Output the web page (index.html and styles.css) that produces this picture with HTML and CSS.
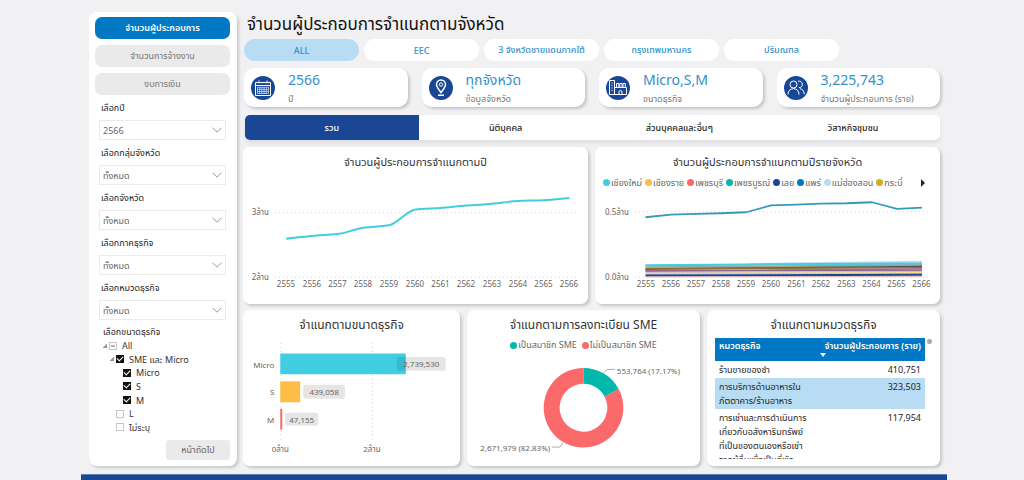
FILE: index.html
```html
<!DOCTYPE html>
<html lang="th">
<head>
<meta charset="utf-8">
<meta name="viewport" content="width=device-width, initial-scale=1">
<title>จำนวนผู้ประกอบการจำแนกตามจังหวัด</title>
<link rel="stylesheet" href="styles.css">
</head>
<body>
<div class="page">
  <div class="layout">
    <aside class="sidebar">
      <nav class="menu">
        <button class="menu-btn active" type="button">จำนวนผู้ประกอบการ</button>
        <button class="menu-btn" type="button">จำนวนการจ้างงาน</button>
        <button class="menu-btn" type="button">งบการเงิน</button>
      </nav>
      <div class="filters">
        <div class="filter"><label for="f1">เลือกปี</label><div class="select"><select id="f1"><option>2566</option></select><svg viewBox="0 0 10 6"><path d="M.5 .7 5 5.2 9.5 .7"/></svg></div></div>
        <div class="filter"><label for="f2">เลือกกลุ่มจังหวัด</label><div class="select"><select id="f2"><option>ทั้งหมด</option></select><svg viewBox="0 0 10 6"><path d="M.5 .7 5 5.2 9.5 .7"/></svg></div></div>
        <div class="filter"><label for="f3">เลือกจังหวัด</label><div class="select"><select id="f3"><option>ทั้งหมด</option></select><svg viewBox="0 0 10 6"><path d="M.5 .7 5 5.2 9.5 .7"/></svg></div></div>
        <div class="filter"><label for="f4">เลือกภาคธุรกิจ</label><div class="select"><select id="f4"><option>ทั้งหมด</option></select><svg viewBox="0 0 10 6"><path d="M.5 .7 5 5.2 9.5 .7"/></svg></div></div>
        <div class="filter"><label for="f5">เลือกหมวดธุรกิจ</label><div class="select"><select id="f5"><option>ทั้งหมด</option></select><svg viewBox="0 0 10 6"><path d="M.5 .7 5 5.2 9.5 .7"/></svg></div></div>
      </div>
      <fieldset class="tree">
        <legend>เลือกขนาดธุรกิจ</legend>
        <label class="node"><i class="caret"></i><input type="checkbox" class="partial">All</label>
        <label class="node level-1"><i class="caret"></i><input type="checkbox" checked>SME และ Micro</label>
        <label class="node level-2"><input type="checkbox" checked>Micro</label>
        <label class="node level-2"><input type="checkbox" checked>S</label>
        <label class="node level-2"><input type="checkbox" checked>M</label>
        <label class="node level-1b"><input type="checkbox">L</label>
        <label class="node level-1b"><input type="checkbox">ไม่ระบุ</label>
      </fieldset>
      <button class="next" type="button">หน้าถัดไป</button>
    </aside>

    <main class="main">
      <h1>จำนวนผู้ประกอบการจำแนกตามจังหวัด</h1>
      <div class="pills">
        <button class="pill active" type="button">ALL</button>
        <button class="pill" type="button">EEC</button>
        <button class="pill" type="button">3 จังหวัดชายแดนภาคใต้</button>
        <button class="pill" type="button">กรุงเทพมหานคร</button>
        <button class="pill" type="button">ปริมณฑล</button>
      </div>
      <div class="stats">
        <div class="stat">
          <svg class="stat-icon" viewBox="0 0 24 24"><circle cx="12" cy="12" r="12"/><path d="M4.500 6.500h15v13h-15zM4.500 9.500h15M8 4.500v3M16 4.500v3"/><path class="fine" d="M6.500 11.300h11v6.200h-11zM6.500 13.400h11M6.500 15.500h11M8.700 11.300v6.200M10.900 11.300v6.200M13.100 11.300v6.200M15.300 11.300v6.200"/></svg>
          <div class="stat-text"><strong>2566</strong><span>ปี</span></div>
        </div>
        <div class="stat">
          <svg class="stat-icon" viewBox="0 0 24 24"><circle cx="12" cy="12" r="12"/><path class="bold" d="M12 16.500C9.500 13 7.500 11 7.500 8.500a4.500 4.500 0 0 1 9 0C16.500 11 14.500 13 12 16.500zM9 19.300h6"/><circle class="ring" cx="12" cy="8.500" r="1.700"/></svg>
          <div class="stat-text"><strong>ทุกจังหวัด</strong><span>ข้อมูลจังหวัด</span></div>
        </div>
        <div class="stat">
          <svg class="stat-icon" viewBox="0 0 24 24"><circle cx="12" cy="12" r="12"/><path d="M3.500 18.500v-14h5v14M8.500 11.500h12v7h-17M10.500 11V7.500h2.300V11M13.800 11V7.500h2.300V11M17 11V7.500h2.300V11M13 18.500V16a1.500 1.500 0 0 1 3 0v2.500"/><path class="fine" d="M5.200 7h1.600M5.200 9.500h1.600M5.200 12h1.600M5.200 14.500h1.600"/></svg>
          <div class="stat-text"><strong>Micro,S,M</strong><span>ขนาดธุรกิจ</span></div>
        </div>
        <div class="stat">
          <svg class="stat-icon" viewBox="0 0 24 24"><circle cx="12" cy="12" r="12"/><circle class="ring" cx="9.500" cy="8.500" r="3.500"/><path d="M4 18.500c0-3.500 2-5.800 5.500-5.800s5.500 2.300 5.500 5.800M14 5.300a3.300 3.300 0 1 1 .8 6.400M16 12.700c2.800.5 4.200 2.600 4.200 5.500"/></svg>
          <div class="stat-text"><strong>3,225,743</strong><span>จำนวนผู้ประกอบการ (ราย)</span></div>
        </div>
      </div>
      <div class="tabs">
        <button class="tab active" type="button">รวม</button>
        <button class="tab" type="button">นิติบุคคล</button>
        <button class="tab" type="button">ส่วนบุคคลและอื่นๆ</button>
        <button class="tab" type="button">วิสาหกิจชุมชน</button>
      </div>

      <div class="row row-two">
        <section class="card">
          <h2>จำนวนผู้ประกอบการจำแนกตามปี</h2>
          <svg class="chart" viewBox="243 175 345 128">
            <path class="grid-line" d="M275 212.500H579M275 277H579"/>
            <g class="axis end"><text x="269" y="215">3ล้าน</text><text x="269" y="280">2ล้าน</text></g>
            <g class="axis mid"><text x="286" y="287">2555</text><text x="312" y="287">2556</text><text x="337.500" y="287">2557</text><text x="363" y="287">2558</text><text x="389" y="287">2559</text><text x="415" y="287">2560</text><text x="440.500" y="287">2561</text><text x="466" y="287">2562</text><text x="492" y="287">2563</text><text x="518" y="287">2564</text><text x="543.500" y="287">2565</text><text x="569" y="287">2566</text></g>
            <path class="line" stroke="#41cee2" stroke-width="2" d="M286 238.500C294.600 237.600 303.200 236.500 311.800 235.700S328.900 234.700 337.500 233.800C346 232.900 354.700 228.700 363.300 227.500S380.400 226.400 389 225C397.600 223.600 406.200 210.600 414.800 209.500S432 208.400 440.600 207.700S457.800 206 466.400 205.300S483.500 204.200 492.100 203.500S509.300 201.100 517.900 200.700S535.100 200.400 543.700 200S560.900 198.500 569.500 197.700"/>
          </svg>
        </section>
        <section class="card">
          <h2>จำนวนผู้ประกอบการจำแนกตามปีรายจังหวัด</h2>
          <div class="legend legend-left">
            <span class="key cyan">เชียงใหม่</span><span class="key amber">เชียงราย</span><span class="key red">เพชรบุรี</span><span class="key teal">เพชรบูรณ์</span><span class="key navy">เลย</span><span class="key blue">แพร่</span><span class="key sky">แม่ฮ่องสอน</span><span class="key gold">กระบี่</span>
            <button class="more" type="button" aria-label="ถัดไป"></button>
          </div>
          <svg class="chart" viewBox="595 190 345 113">
            <path class="grid-line" d="M635 211.500H931M635 277H931"/>
            <g class="axis end"><text x="629" y="215">0.5ล้าน</text><text x="629" y="280">0.0ล้าน</text></g>
            <g class="axis mid"><text x="646" y="287">2555</text><text x="671" y="287">2556</text><text x="696" y="287">2557</text><text x="721" y="287">2558</text><text x="746" y="287">2559</text><text x="771" y="287">2560</text><text x="796.500" y="287">2561</text><text x="821" y="287">2562</text><text x="846.500" y="287">2563</text><text x="871.500" y="287">2564</text><text x="896.500" y="287">2565</text><text x="921.500" y="287">2566</text></g>
            <path class="line" stroke="#3599b8" stroke-width="1.800" d="M645.500 217 671 214.300 696 213.600 721 213 746 212 771 205.200 796 204.300 821 203.300 847 203 872 202 897 208.700 922 207.300"/>
            <g class="line" stroke-width="1.500">
              <path stroke="#b8dcf3" stroke-width="2" d="M746 264.500 771 263.500 922 261.500"/>
              <path stroke="#41cee2" stroke-width="2.200" d="M645.500 265 746 264.300 922 263.300"/>
              <path stroke="#8aa9b2" d="M645.500 266.700 922 264.800"/>
              <path stroke="#b79a82" d="M645.500 268 922 265.200"/>
              <path stroke="#52585c" d="M645.500 269 922 266.300"/>
              <path stroke="#8c7323" d="M645.500 268.500 922 267.400"/>
              <path stroke="#c0697c" d="M645.500 270.300 922 268.800"/>
              <path stroke="#85649b" d="M645.500 271 922 270"/>
              <path stroke="#c9b8dd" d="M645.500 272.200 922 271.200"/>
              <path stroke="#f2dc83" d="M645.500 273.300 922 272.400"/>
              <path stroke="#b8c4ce" d="M645.500 274.300 922 273.600"/>
              <path stroke="#194796" stroke-width="2" d="M645.500 275.300 922 274.600"/>
              <path stroke="#e8a5a5" stroke-width=".8" d="M645.500 276.600 922 276.200"/>
            </g>
          </svg>
        </section>
      </div>

      <div class="row row-three">
        <section class="card">
          <h2>จำแนกตามขนาดธุรกิจ</h2>
          <svg class="chart" viewBox="243 337 217 129">
            <path class="grid-line" d="M280.500 342V442M372.500 342V442"/>
            <path fill="#41cee2" d="M280 352.500h126v21H280z"/>
            <path fill="#ffbc47" d="M280 380.500h20v21h-20z"/>
            <path fill="#fb6a6a" d="M280 408h2v21h-2z"/>
            <g class="tag"><rect x="397" y="356" width="49" height="14" rx="2"/><rect x="303" y="384" width="42" height="14" rx="2"/><rect x="285" y="412" width="33" height="13" rx="2"/></g>
            <g class="axis mid"><text x="421.500" y="366.500">2,739,530</text><text x="324" y="394">439,058</text><text x="301.500" y="422">47,155</text><text x="280" y="451">0ล้าน</text><text x="372" y="451">2ล้าน</text></g>
            <g class="axis end"><text x="274" y="367">Micro</text><text x="274" y="394">S</text><text x="274" y="422">M</text></g>
          </svg>
        </section>
        <section class="card">
          <h2>จำแนกตามการลงทะเบียน SME</h2>
          <div class="legend legend-mid"><span class="key teal">เป็นสมาชิก SME</span><span class="key red">ไม่เป็นสมาชิก SME</span></div>
          <svg class="chart" viewBox="468 352 233 114">
            <path fill="#fb6a6a" d="M619.750 388.100A40 40 0 1 1 584.500 367V383A24 24 0 1 0 605.650 395.660z"/>
            <path fill="#01b8aa" d="M584.500 367A40 40 0 0 1 619.750 388.100L605.650 395.660A24 24 0 0 0 584.500 383z"/>
            <path class="leader" d="M605 372 608 368.500H616M553 446.500H561L564 442"/>
            <g class="axis"><text x="618" y="373">553,764 (17.17%)</text></g>
            <g class="axis end"><text x="551" y="450">2,671,979 (82.83%)</text></g>
          </svg>
        </section>
        <section class="card">
          <h2>จำแนกตามหมวดธุรกิจ</h2>
          <div class="table-wrap">
            <table>
              <thead><tr><th scope="col">หมวดธุรกิจ</th><th scope="col" class="num">จำนวนผู้ประกอบการ (ราย)<i class="sort"></i></th></tr></thead>
              <tbody>
                <tr><td>ร้านขายของชำ</td><td class="num">410,751</td></tr>
                <tr class="alt"><td>การบริการด้านอาหารใน<br>ภัตตาคาร/ร้านอาหาร</td><td class="num">323,503</td></tr>
                <tr><td>การเช่าและการดำเนินการ<br>เกี่ยวกับอสังหาริมทรัพย์<br>ที่เป็นของตนเองหรือเช่า<br>จากผู้อื่นเพื่อเป็นที่พัก</td><td class="num">117,954</td></tr>
              </tbody>
            </table>
            <i class="thumb"></i>
          </div>
        </section>
      </div>
    </main>
  </div>
  <footer class="footer"></footer>
</div>
</body>
</html>
```
FILE: styles.css
```css
* { box-sizing: border-box; }
body {
  margin: 0;
  background: #f1f1f4;
  color: #252423;
  font-family: "Noto Sans", "Noto Sans Thai", "Prompt", sans-serif;
  font-size: 9px;
}
button, select, input { font: inherit; margin: 0; }
button { border: 0; padding: 0; cursor: pointer; white-space: nowrap; }
h1, h2 { margin: 0; font-weight: 400; white-space: nowrap; }

.page {
  display: flex;
  flex-direction: column;
  height: 100vh;
  min-height: 480px;
  overflow: hidden;
  padding: 12px 77px 0 81px;
}
.layout {
  flex: 1;
  min-height: 0;
  display: grid;
  grid-template-columns: 148px minmax(0, 1fr);
  grid-template-rows: minmax(0, 1fr);
  gap: 6px;
  padding: 0 7px 8px 8px;
}
.footer {
  flex: 0 0 6px;
  background: #194796;
  border-top: 1px solid #5f7fb5;
}

/* Sidebar */
.sidebar {
  display: flex;
  flex-direction: column;
  padding: 5px 7px 6px 6px;
  background: #fff;
  border-radius: 8px;
  box-shadow: 2px 2px 3px rgba(0, 0, 0, .16);
}
.menu { display: grid; gap: 6px; }
.menu-btn {
  height: 22px;
  border-radius: 7px;
  background: #eaeaea;
  color: #777;
}
.menu-btn.active { background: #0078c4; color: #fff; font-weight: 600; }
.filters { padding: 0 4px; }
.filter > label { display: block; height: 25px; padding-left: 2px; line-height: 26px; }
.select { position: relative; height: 20px; }
.select select {
  appearance: none;
  display: block;
  width: 100%;
  height: 100%;
  padding: 0 3px;
  border: 1px solid #eaeaea;
  border-radius: 0;
  background: #fff;
  color: #666;
}
.select svg {
  position: absolute;
  right: 4px;
  top: 7px;
  width: 10px;
  height: 6px;
  fill: none;
  stroke: #999;
  pointer-events: none;
}
.tree {
  flex: 1;
  display: flex;
  flex-direction: column;
  justify-content: space-between;
  min-width: 0;
  min-height: 0;
  margin: 5px 0 6px;
  padding: 0 0 0 8px;
  border: 0;
}
.tree legend { padding: 0; line-height: 14px; }
.node { display: flex; align-items: center; line-height: 13px; color: #333; }
.level-1 { padding-left: 7px; }
.level-1b { padding-left: 13px; }
.level-2 { padding-left: 20px; }
.caret {
  width: 4px;
  height: 4px;
  margin-right: 2px;
  background: linear-gradient(135deg, transparent 50%, #999 50%);
}
.node input {
  appearance: none;
  width: 8px;
  height: 8px;
  margin-right: 5px;
  border: 1px solid #c8c6c4;
  background: #fff;
}
.node input:checked { border-color: #111; background: #111; }
.node input:checked::after {
  content: "";
  display: block;
  width: 5px;
  height: 3px;
  border: solid #fff;
  border-width: 0 0 1px 1px;
  transform: rotate(-45deg);
}
.node .partial { background: linear-gradient(#b5b3b1, #b5b3b1) center / 4px 2px no-repeat #fff; }
.next {
  align-self: flex-end;
  width: 64px;
  height: 20px;
  border-radius: 3px;
  background: #eaeaea;
  color: #666;
}

/* Main column */
.main { display: flex; flex-direction: column; min-width: 0; }
h1 { height: 27px; padding-left: 4px; font-size: 17px; line-height: 23px; color: #111; }
.pills { display: flex; gap: 5px; padding-left: 1px; }
.pill {
  flex: 0 0 115px;
  height: 22px;
  border-radius: 11px;
  background: #fff;
  color: #3191cf;
  font-weight: 500;
}
.pill.active { background: #b7dcf4; }
.stats { display: grid; grid-template-columns: repeat(4, 1fr); gap: 14px; margin-top: 7px; padding-left: 1px; }
.stat {
  display: flex;
  align-items: center;
  gap: 13px;
  height: 39px;
  padding-left: 7px;
  background: #fff;
  border-radius: 10px;
  box-shadow: 2px 2px 3px rgba(0, 0, 0, .18);
  white-space: nowrap;
}
.stat-icon { width: 24px; height: 24px; fill: none; stroke: #fff; stroke-width: 1; }
.stat-icon circle { fill: #194796; stroke: none; }
.stat-icon .ring { fill: none; stroke: #fff; }
.stat-icon .fine { stroke-width: .6; }
.stat-icon .bold { stroke-width: 1.5; }
.stat-text { display: grid; padding-top: 4px; }
.stat-text strong { font-size: 14px; line-height: 19px; font-weight: 400; color: #3191cf; }
.stat-text span { line-height: 20px; color: #777; }
.tabs {
  display: grid;
  grid-template-columns: repeat(4, 1fr);
  margin: 8px 0 0 2px;
  border-radius: 5px;
  background: #fff;
  box-shadow: 0 3px 4px rgba(0, 0, 0, .08);
}
.tab { height: 25px; background: none; font-weight: 500; color: #252423; }
.tab.active { background: #194796; color: #fff; border-radius: 5px 0 0 5px; }

.row { display: grid; grid-template-rows: minmax(0, 1fr); flex: 1; min-height: 0; }
.row-two { grid-template-columns: 1fr 1fr; gap: 7px; margin-top: 7px; }
.row-three { grid-template-columns: 217fr 233fr 233fr; gap: 7px; margin-top: 6px; }
.card {
  display: flex;
  flex-direction: column;
  min-width: 0;
  min-height: 0;
  background: #fff;
  border-radius: 7px;
  box-shadow: 2px 2px 3px rgba(0, 0, 0, .18);
}
.card h2 { flex: none; height: 28px; line-height: 30px; font-size: 12px; text-align: center; color: #333; }
.row-two h2 { font-size: 11px; }
.chart { display: block; flex: 1; width: 100%; min-height: 0; }
.grid-line { fill: none; stroke: #d6d6d6; stroke-width: 1; stroke-dasharray: 1 3; }
.axis { font-size: 8px; fill: #666; }
.end { text-anchor: end; }
.mid { text-anchor: middle; }
.line { fill: none; stroke-linejoin: round; }
.tag { fill: #000; fill-opacity: .1; }
.leader { fill: none; stroke: #aaa; stroke-width: 1; }

.legend { display: flex; flex: none; align-items: center; gap: 3px; height: 15px; color: #666; white-space: nowrap; }
.legend-left { padding: 0 15px 0 8px; }
.legend-mid { justify-content: center; gap: 5px; }
.key { display: flex; align-items: center; gap: 1px; }
.key::before { content: ""; width: 7px; height: 7px; border-radius: 50%; background: currentColor; }
.cyan::before { background: #41cee2; }
.amber::before { background: #ffbc47; }
.red::before { background: #fb6a6a; }
.teal::before { background: #01b8aa; }
.navy::before { background: #194796; }
.blue::before { background: #0078c4; }
.sky::before { background: #b7dcf4; }
.gold::before { background: #d0ae1c; }
.more {
  margin-left: auto;
  border: solid transparent;
  border-width: 4px 0 4px 4px;
  border-left-color: #252423;
  background: none;
}

/* Table */
.table-wrap {
  position: relative;
  flex: 1;
  min-height: 0;
  margin: 0 5px 7px 8px;
  padding-right: 10px;
  overflow: hidden;
}
table { width: 100%; border-collapse: collapse; line-height: 14px; }
th, td { text-align: left; vertical-align: top; white-space: nowrap; }
th { position: relative; padding: 1px 4px 8px; background: #0078c4; color: #fff; font-weight: 600; }
td { padding: 2px 4px 1px; }
.num { text-align: right; }
.alt { background: #b7dcf4; }
.sort {
  position: absolute;
  left: 5px;
  bottom: 4px;
  border: solid transparent;
  border-width: 4px 3px 0;
  border-top-color: #fff;
}
.thumb {
  position: absolute;
  top: 1px;
  right: 3px;
  width: 5px;
  height: 5px;
  border-radius: 50%;
  background: #aaa;
}
```
